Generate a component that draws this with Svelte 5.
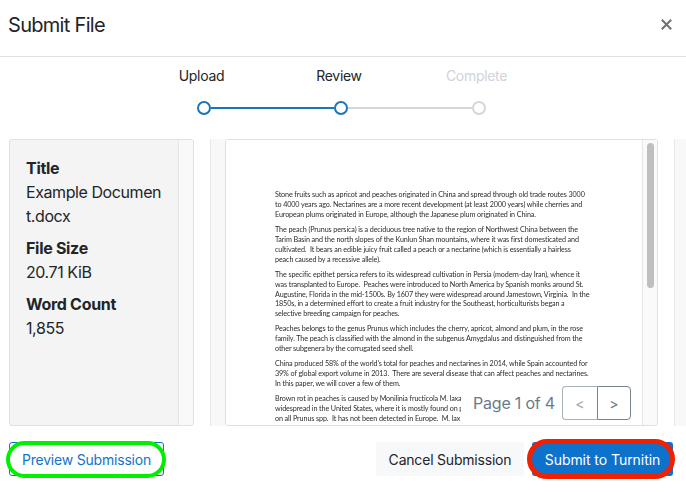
<script lang="ts">
  const steps = [
    { label: 'Upload', done: true },
    { label: 'Review', done: true },
    { label: 'Complete', done: false }
  ];

  const details = [
    { name: 'Title', value: 'Example Document.docx' },
    { name: 'File Size', value: '20.71 KiB' },
    { name: 'Word Count', value: '1,855' }
  ];

  const paragraphs = [
    [
      'Stone fruits such as apricot and peaches originated in China and spread through old trade routes 3000',
      'to 4000 years ago. Nectarines are a more recent development (at least 2000 years) while cherries and',
      'European plums originated in Europe, although the Japanese plum originated in China.'
    ],
    [
      'The peach (Prunus persica) is a deciduous tree native to the region of Northwest China between the',
      'Tarim Basin and the north slopes of the Kunlun Shan mountains, where it was first domesticated and',
      'cultivated.  It bears an edible juicy fruit called a peach or a nectarine (which is essentially a hairless',
      'peach caused by a recessive allele).'
    ],
    [
      'The specific epithet persica refers to its widespread cultivation in Persia (modern-day Iran), whence it',
      'was transplanted to Europe.  Peaches were introduced to North America by Spanish monks around St.',
      'Augustine, Florida in the mid-1500s. By 1607 they were widespread around Jamestown, Virginia.  In the',
      '1850s, in a determined effort to create a fruit industry for the Southeast, horticulturists began a',
      'selective breeding campaign for peaches.'
    ],
    [
      'Peaches belongs to the genus Prunus which includes the cherry, apricot, almond and plum, in the rose',
      'family. The peach is classified with the almond in the subgenus Amygdalus and distinguished from the',
      'other subgenera by the corrugated seed shell.'
    ],
    [
      "China produced 58% of the world's total for peaches and nectarines in 2014, while Spain accounted for",
      '39% of global export volume in 2013.  There are several disease that can affect peaches and nectarines.',
      'In this paper, we will cover a few of them.'
    ]
  ];

  // the pager hides the rest of these lines
  const covered = [
    'Brown rot in peaches is caused by Monilinia fructicola M. laxa',
    'widespread in the United States, where it is mostly found on p',
    'on all Prunus spp.  It has not been detected in Europe.  M. lax'
  ];
</script>

<div class="modal">
  <header class="head">
    <h1>Submit File</h1>
    <button class="close" aria-label="Close">
      <svg width="11" height="11" viewBox="0 0 11 11">
        <path d="M0.8 0.8 10.2 10.2M10.2 0.8 0.8 10.2" />
      </svg>
    </button>
  </header>

  <section class="stepper">
    <div class="labels">
      {#each steps as step}
        <span class:off={!step.done}>{step.label}</span>
      {/each}
    </div>
    <div class="track">
      <i class="dot"></i>
      <i class="bar"></i>
      <i class="dot"></i>
      <i class="bar off"></i>
      <i class="dot off"></i>
    </div>
  </section>

  <section class="panes">
    <aside class="info">
      <div class="info-body">
        {#each details as item}
          <dl>
            <dt>{item.name}</dt>
            <dd>{item.value}</dd>
          </dl>
        {/each}
      </div>
      <div class="info-strip"></div>
    </aside>

    <div class="viewer">
      <div class="viewer-strip"></div>
      <div class="page">
        <div class="page-text">
          {#each paragraphs as lines}
            <p>
              {#each lines as line}
                <span>{line}</span>
              {/each}
            </p>
          {/each}
          <p class="covered">
            {#each covered as line}
              <span>{line}</span>
            {/each}
          </p>
        </div>
        <div class="scrollbar"><div class="thumb"></div></div>
        <div class="pager">
          <span class="count">Page 1 of 4</span>
          <div class="pager-btns">
            <button class="prev">&lt;</button>
            <button class="next">&gt;</button>
          </div>
        </div>
      </div>
    </div>

    <div class="next-strip"></div>
  </section>

  <footer class="foot">
    <button class="btn preview">Preview Submission</button>
    <div class="foot-right">
      <button class="btn cancel">Cancel Submission</button>
      <button class="btn submit">Submit to Turnitin</button>
    </div>
  </footer>
</div>

<style>
  :global(body) {
    margin: 0;
    background: #fff;
  }

  .modal {
    width: 686px;
    height: 492px;
    overflow: hidden;
    font-family: Inter, 'Liberation Sans', sans-serif;
    color: #212529;
  }

  .head {
    display: flex;
    align-items: center;
    justify-content: space-between;
    height: 57px;
    padding: 0 14px 7px 8px;
    box-sizing: border-box;
    border-bottom: 1px solid #dfe1e4;
  }

  h1 {
    margin: 0;
    font-size: 20px;
    font-weight: 400;
    line-height: 50px;
    letter-spacing: -0.7px;
  }

  .close {
    display: flex;
    padding: 0;
    border: 0;
    background: none;
  }

  .close path {
    fill: none;
    stroke: #6d7175;
    stroke-width: 2;
  }

  .stepper {
    height: 82px;
    box-sizing: border-box;
    padding-top: 9px;
    display: flex;
    flex-direction: column;
    align-items: center;
  }

  .labels {
    display: grid;
    grid-template-columns: repeat(3, 137.5px);
    margin-left: -8px;
    font-size: 14px;
    line-height: 20px;
    letter-spacing: -0.3px;
    text-align: center;
  }

  .labels .off {
    color: #d0d3d8;
  }

  .track {
    display: flex;
    align-items: center;
    width: 289px;
    margin: 15px 0 0 -4px;
  }

  .dot {
    width: 14px;
    height: 14px;
    box-sizing: border-box;
    border: 2px solid #1a75bb;
    border-radius: 50%;
    background: #fff;
  }

  .dot.off {
    border-color: #d4d6da;
  }

  .bar {
    flex: 1;
    height: 2px;
    background: #1a75bb;
  }

  .bar.off {
    background: #d4d6da;
  }

  .panes {
    display: flex;
    gap: 16px;
    height: 287px;
    padding-left: 9px;
  }

  .info {
    display: flex;
    width: 185px;
    flex: none;
    box-sizing: border-box;
    border: 1px solid #e0e0e0;
    border-radius: 3px;
    background: #f4f4f4;
    overflow: hidden;
  }

  .info-body {
    flex: 1;
    min-width: 0;
    box-sizing: border-box;
    padding: 16px 15px 0 16px;
    font-size: 16px;
    line-height: 24px;
    letter-spacing: -0.3px;
  }

  dl {
    margin: 0 0 8px;
  }

  dt {
    font-weight: 700;
  }

  dd {
    margin: 0;
    word-break: break-all;
    letter-spacing: -0.42px;
  }

  .info-strip {
    width: 14px;
    flex: none;
    border-left: 1px solid #e6e6e6;
    background: #f9f9f9;
  }

  .viewer {
    display: flex;
    width: 448px;
    flex: none;
  }

  .viewer-strip {
    width: 15px;
    flex: none;
    box-sizing: border-box;
    border-left: 1px solid #e8e8e8;
    background: #f8f8f8;
  }

  .page {
    position: relative;
    flex: 1;
    overflow: hidden;
    box-sizing: border-box;
    border: 1px solid #e0e0e0;
    border-radius: 3px;
    background: #fff;
  }

  .page-text {
    padding: 50px 0 0 49px;
    font-family: Lato, 'Open Sans', sans-serif;
    font-size: 7.2px;
    line-height: 9.9px;
    letter-spacing: -0.11px;
    color: #2c2c2c;
    filter: blur(0.25px);
  }

  .page-text p {
    margin: 0 0 5.2px;
  }

  .page-text span {
    display: block;
    white-space: pre;
  }

  .covered span {
    width: 186px;
    overflow: hidden;
  }

  .scrollbar {
    position: absolute;
    top: 0;
    right: 0;
    bottom: 0;
    width: 15px;
    box-sizing: border-box;
    padding: 3px 3px 0 4px;
    border-left: 1px solid #e6e6e6;
    background: #fafafa;
  }

  .thumb {
    height: 145px;
    border-radius: 4px;
    background: #bfbfbf;
  }

  .pager {
    position: absolute;
    left: 235px;
    right: 15px;
    bottom: 0;
    height: 39px;
    display: flex;
    gap: 7px;
    background: #fff;
  }

  .count {
    margin-left: 12px;
    font-size: 16px;
    line-height: 34px;
    letter-spacing: -0.2px;
    color: #6b7a8a;
  }

  .pager-btns {
    display: flex;
    height: 34px;
  }

  .pager-btns button {
    width: 34.5px;
    padding: 0;
    background: #fff;
    font-family: inherit;
    font-size: 14px;
    color: #6b7a8a;
  }

  .prev {
    border: 1px solid #a9b1ba;
    border-right: 0;
    border-radius: 4px 0 0 4px;
    color: #a0a8b0 !important;
  }

  .next {
    border: 1px solid #77848f;
    border-radius: 0 4px 4px 0;
  }

  .next-strip {
    flex: 1;
    border-left: 1px solid #e8e8e8;
    background: #f8f8f8;
  }

  .foot {
    display: flex;
    justify-content: space-between;
    padding: 16px 13px 0 9px;
  }

  .foot-right {
    display: flex;
    gap: 8px;
  }

  .btn {
    position: relative;
    height: 34px;
    box-sizing: border-box;
    padding: 0;
    border-radius: 3px;
    font-family: inherit;
    font-size: 14px;
    letter-spacing: -0.2px;
  }

  .preview {
    width: 155px;
    border: 1px solid #1274c9;
    background: #fff;
    color: #1274c9;
  }

  .preview::after {
    content: '';
    position: absolute;
    inset: -2px -3px -3px -4px;
    border: 4px solid #00ee00;
    border-radius: 19px;
  }

  .cancel {
    width: 148px;
    border: 0;
    background: #f7f8fa;
    color: #212529;
  }

  .submit {
    width: 141px;
    border: 0;
    background: #0d72cc;
    color: #fff;
    letter-spacing: -0.05px;
  }

  .submit::after {
    content: '';
    position: absolute;
    inset: -3px -2px -3px -5px;
    border: 5px solid #f02000;
    border-radius: 20px;
  }
</style>
